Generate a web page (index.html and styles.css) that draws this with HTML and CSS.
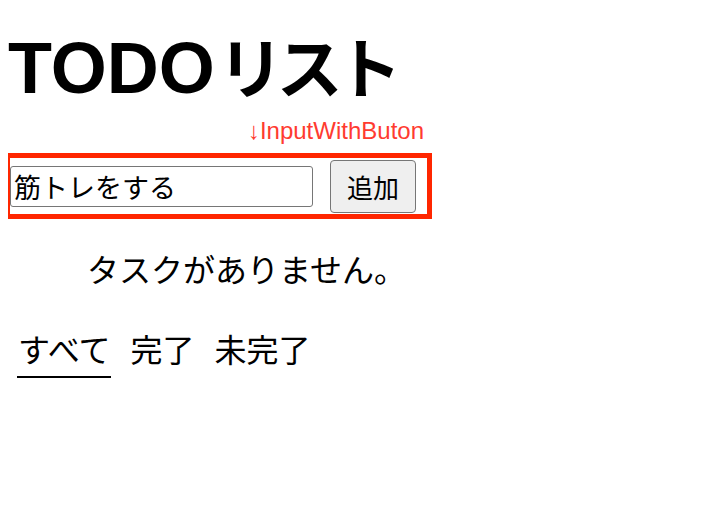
FILE: index.html
```html
<!DOCTYPE html>
<html lang="ja">
<head>
<meta charset="utf-8">
<title>TODOリスト</title>
<link rel="stylesheet" href="styles.css">
</head>
<body>
<main class="app">
  <h1 class="title">TODO<span class="title-ja">リスト</span></h1>
  <p class="label">↓InputWithButon</p>
  <div class="input-with-button">
    <input class="task-input" type="text" value="筋トレをする">
    <button class="add-button" type="button">追加</button>
  </div>
  <p class="empty">タスクがありません。</p>
  <nav class="tabs">
    <span class="tab active">すべて</span>
    <span class="tab">完了</span>
    <span class="tab">未完了</span>
  </nav>
</main>
</body>
</html>
```
FILE: styles.css
```css
body {
  margin: 8px;
  background: #fff;
  color: #000;
  font-family: "Liberation Sans", "Noto Sans CJK JP", sans-serif;
}

.title {
  margin: 20px 0 0;
  font-size: 72px;
  line-height: 80px;
  font-weight: bold;
}

.title-ja {
  margin-left: 3px;
  font-size: 66px;
  line-height: 1;
  letter-spacing: -7px;
}

.label {
  margin: 9px 0 0;
  width: 416px;
  text-align: right;
  color: #ff3b30;
  font-size: 24px;
  line-height: 28px;
}

.input-with-button {
  margin: 8px 0 0 -3px;
  width: 427px;
  height: 66px;
  box-sizing: border-box;
  border: 5px solid #ff2600;
  display: flex;
  align-items: center;
  gap: 17px;
}

.task-input {
  width: 303px;
  height: 41px;
  box-sizing: border-box;
  margin: 0;
  padding: 0 3px;
  border: 1px solid #767676;
  border-radius: 3px;
  font-family: "Noto Sans CJK JP", sans-serif;
  font-size: 27px;
  color: #000;
}

.add-button {
  width: 86px;
  height: 53px;
  box-sizing: border-box;
  margin: 0;
  padding: 0;
  border: 1px solid #767676;
  border-radius: 4px;
  background: #efefef;
  font-family: "Noto Sans CJK JP", sans-serif;
  font-size: 26px;
  color: #000;
}

.empty {
  margin: 29px 0 0 79px;
  font-family: "Noto Sans CJK JP", sans-serif;
  font-size: 32px;
  line-height: 40px;
}

.tabs {
  display: flex;
  gap: 18px;
  margin: 40px 0 0 9px;
}

.tab {
  font-family: "Noto Sans CJK JP", sans-serif;
  font-size: 32px;
  line-height: 40px;
  padding: 0 1px 8px;
  border-bottom: 2px solid transparent;
}

.tab.active {
  border-bottom-color: #000;
}
```
